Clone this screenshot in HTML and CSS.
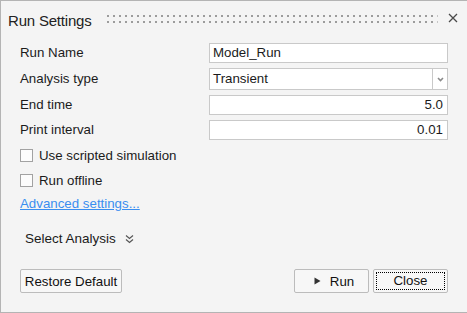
FILE: index.html
```html
<!DOCTYPE html>
<html>
<head>
<meta charset="utf-8">
<link rel="stylesheet" href="styles.css">
</head>
<body>
<div class="window">
  <div class="titlebar">
    <span class="title">Run Settings</span>
    <svg class="grip" height="8" aria-hidden="true">
      <defs>
        <pattern id="dots" width="6" height="6" patternUnits="userSpaceOnUse">
          <rect x="0" y="0" width="2" height="2" fill="#9c9c9c"/>
        </pattern>
      </defs>
      <rect width="100%" height="8" fill="url(#dots)"/>
    </svg>
    <svg class="close" width="10" height="10" viewBox="0 0 10 10" aria-hidden="true">
      <path d="M1 1 L9 9 M9 1 L1 9" stroke="#4a4a4a" stroke-width="1.3" fill="none"/>
    </svg>
  </div>

  <div class="form">
    <label class="label">Run Name</label>
    <div class="field">Model_Run</div>

    <label class="label">Analysis type</label>
    <div class="field select">
      <span class="select-text">Transient</span>
      <span class="select-btn">
        <svg width="7" height="5" viewBox="0 0 7 5" aria-hidden="true">
          <path d="M1 1 L3.5 3.5 L6 1" stroke="#8a8a8a" stroke-width="1.6" fill="none"/>
        </svg>
      </span>
    </div>

    <label class="label">End time</label>
    <div class="field num">5.0</div>

    <label class="label">Print interval</label>
    <div class="field num">0.01</div>
  </div>

  <div class="options">
    <div class="check-row"><span class="checkbox"></span><span>Use scripted simulation</span></div>
    <div class="check-row"><span class="checkbox"></span><span>Run offline</span></div>
    <a class="link">Advanced settings...</a>
    <div class="section">
      <span>Select Analysis</span>
      <svg width="9" height="10" viewBox="0 0 9 10" aria-hidden="true">
        <path d="M1 1.5 L4.5 4.5 L8 1.5 M1 5.5 L4.5 8.5 L8 5.5" stroke="#555" stroke-width="1.2" fill="none"/>
      </svg>
    </div>
  </div>

  <div class="footer">
    <button class="btn restore">Restore Default</button>
    <div class="spacer"></div>
    <button class="btn run">
      <svg width="7" height="8" viewBox="0 0 7 8" aria-hidden="true"><path d="M0.5 0.5 L6.5 4 L0.5 7.5 Z" fill="#333"/></svg>
      <span>Run</span>
    </button>
    <button class="btn close-btn"><span class="focus">Close</span></button>
  </div>
</div>
</body>
</html>
```

FILE: styles.css
```css
* { box-sizing: border-box; }

html, body {
  margin: 0;
  padding: 0;
  background: #f4f4f4;
}

body {
  font-family: "Liberation Sans", Arial, sans-serif;
  font-size: 13.3px;
  color: #1b1b1b;
}

.window {
  height: 313px;
  border: 1px solid #b4b4b4;
  border-right: none;
  display: flex;
  flex-direction: column;
}

.titlebar {
  height: 34px;
  display: flex;
  align-items: flex-start;
  padding: 11px 9px 0 7px;
}

.title {
  font-size: 15px;
  line-height: 17px;
  letter-spacing: -0.2px;
  color: #222;
}

.grip {
  flex: 1;
  height: 8px;
  margin: 3px 10px 0 16px;
}

.close {
  margin-top: 1px;
}

.form {
  display: grid;
  grid-template-columns: 189px 239px;
  row-gap: 5px;
  padding: 8px 0 0 19px;
}

.label {
  align-self: center;
  line-height: 16px;
}

.field {
  height: 20px;
  background: #fff;
  border: 1px solid #c9c9c9;
  padding: 0 3px;
  line-height: 18px;
  white-space: nowrap;
}

.field.num {
  text-align: right;
  padding-right: 4px;
}

.field.select {
  height: 22px;
  display: flex;
  padding: 0 0 0 3px;
  line-height: 20px;
}

.select-text {
  flex: 1;
}

.select-btn {
  width: 15px;
  border-left: 1px solid #c9c9c9;
  display: flex;
  align-items: center;
  justify-content: center;
}

.options {
  display: flex;
  flex-direction: column;
  padding: 5px 0 0 19px;
}

.check-row {
  height: 20px;
  display: flex;
  align-items: center;
  gap: 6px;
  margin-bottom: 5px;
}

.checkbox {
  width: 13px;
  height: 13px;
  border: 1px solid #a2a2a2;
  background: #fcfcfc;
}

.link {
  align-self: flex-start;
  color: #3a8ef0;
  text-decoration: underline;
  line-height: 16px;
  margin-top: 1px;
}

.section {
  display: flex;
  align-items: center;
  gap: 9px;
  padding-left: 5px;
  margin-top: 19px;
  font-size: 13.5px;
  line-height: 16px;
}

.footer {
  display: flex;
  padding: 0 19px 0 19px;
  margin-top: auto;
  margin-bottom: 19px;
  gap: 4px;
}

.spacer {
  flex: 1;
}

.btn {
  height: 24px;
  font-family: "Liberation Sans", Arial, sans-serif;
  font-size: 13.3px;
  color: #111;
  background: #f7f7f7;
  border: 1px solid #bcbcbc;
  border-radius: 2px;
  padding: 0;
}

.restore {
  width: 102px;
}

.run {
  width: 75px;
  display: flex;
  align-items: center;
  justify-content: center;
  gap: 9px;
  padding-left: 5px;
}

.close-btn {
  width: 75px;
  padding: 2px;
}

.focus {
  display: block;
  height: 100%;
  border: 1px dotted #000;
  line-height: 16px;
}
```
